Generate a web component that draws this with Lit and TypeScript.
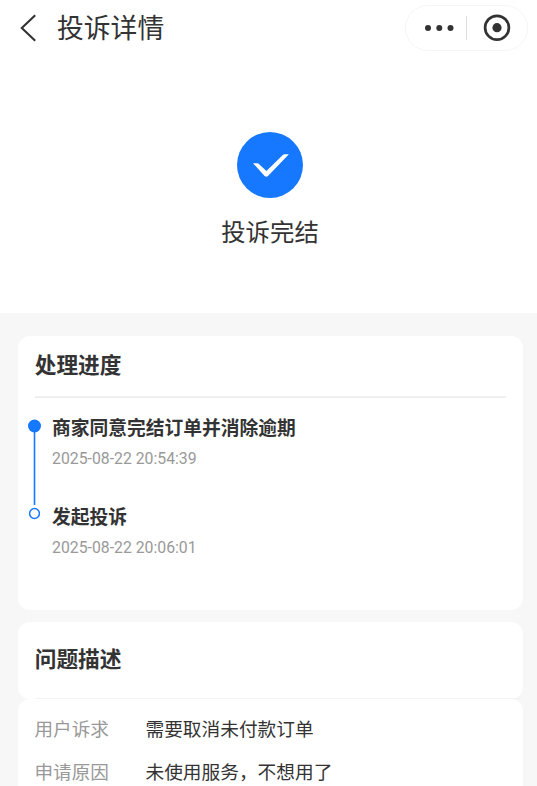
import { LitElement, html, css } from "lit";
import { customElement } from "lit/decorators.js";

interface Step {
  title: string;
  time: string;
}

const steps: Step[] = [
  { title: "商家同意完结订单并消除逾期", time: "2025-08-22 20:54:39" },
  { title: "发起投诉", time: "2025-08-22 20:06:01" },
];

const details: [string, string][] = [
  ["用户诉求", "需要取消未付款订单"],
  ["申请原因", "未使用服务，不想用了"],
];

@customElement("app-root")
export class AppRoot extends LitElement {
  static styles = css`
    :host {
      display: block;
      height: 786px;
      overflow: hidden;
      background: #f7f7f7;
      color: #333;
      font-family: Roboto, "Noto Sans CJK SC", sans-serif;
    }
    * {
      box-sizing: border-box;
    }
    svg {
      display: block;
    }
    .top {
      height: 313px;
      background: #fff;
    }
    .nav {
      height: 56px;
      padding: 5px 9px 0 20px;
      display: flex;
      align-items: flex-start;
    }
    .back {
      margin-top: 9px;
    }
    .nav-title {
      margin-left: 20px;
      margin-top: 4px;
      flex: 1;
      font-size: 26.8px;
      line-height: 40px;
    }
    .capsule {
      width: 123px;
      height: 46px;
      border: 1px solid #f5f5f5;
      border-radius: 23px;
    }
    .result {
      margin-top: 76px;
      display: flex;
      flex-direction: column;
      align-items: center;
      padding-left: 3px;
    }
    .result-text {
      margin-top: 17px;
      font-size: 24.4px;
      line-height: 36px;
    }
    .card {
      margin: 0 14.5px 0 17.5px;
      background: #fff;
      border-radius: 12px;
    }
    .progress {
      margin-top: 23px;
      height: 273.5px;
    }
    .problem {
      margin-top: 12px;
      height: 77.5px;
      display: flex;
      flex-direction: column;
      justify-content: space-between;
    }
    .heading {
      font-size: 21.7px;
      line-height: 32px;
      font-weight: 700;
      padding-left: 17.2px;
    }
    .progress .heading {
      padding-top: 14px;
    }
    .problem .heading {
      padding-top: 22px;
    }
    .rule {
      height: 2px;
      margin: 14px 17px 0 17px;
      border-top: 1px solid #f3f3f3;
      border-bottom: 1px solid #ececec;
    }
    .rule.faint {
      height: 1px;
      margin: 0 0 0 17px;
      background: #f3f3f3;
      border: 0;
    }
    .timeline {
      display: flex;
      padding: 16px 0 0 10px;
    }
    .steps {
      margin-left: 11.5px;
    }
    .rail {
      margin-top: 5px;
    }
    .step {
      height: 88.5px;
    }
    .step-title {
      padding-top: 1px;
      font-size: 18.75px;
      line-height: 28px;
      font-weight: 700;
    }
    .step-time {
      margin-top: 6px;
      font-size: 15.8px;
      line-height: 20px;
      color: #999;
    }
    .details {
      height: 120px;
      padding: 9.5px 17px;
    }
    .row {
      display: flex;
      height: 43px;
      font-size: 18.7px;
      line-height: 42px;
    }
    .label {
      width: 111px;
      font-size: 18.6px;
      color: #999;
    }
  `;

  render() {
    return html`
      <section class="top">
        <header class="nav">
          <svg class="back" width="17" height="29" viewBox="0 0 17 29" fill="none" stroke="#333" stroke-width="2.1">
            <path d="M15.2 1.2 1.8 14 15.2 26.7" />
          </svg>
          <div class="nav-title">投诉详情</div>
          <div class="capsule">
            <svg width="121" height="44" viewBox="0 0 121 44" fill="#333">
              <circle cx="22" cy="22" r="3" />
              <circle cx="33.3" cy="22" r="3" />
              <circle cx="44.5" cy="22" r="3" />
              <path d="M60.5 10v24" stroke="#ddd" />
              <circle cx="91" cy="21.7" r="11.9" fill="none" stroke="#333" stroke-width="2.7" />
              <circle cx="91" cy="21.7" r="4.6" />
            </svg>
          </div>
        </header>
        <div class="result">
          <svg width="66" height="66" viewBox="0 0 66 66">
            <circle cx="33" cy="33" r="33" fill="#1677ff" />
            <path d="M16 31.2h4.2q1 0 1.7.8l7.5 7 16.4-16q.8-.8 1.8-.8h4.3L31 44q-1.7 1.6-3.4 0Z" fill="#fff" />
          </svg>
          <div class="result-text">投诉完结</div>
        </div>
      </section>

      <section class="card progress">
        <div class="heading">处理进度</div>
        <div class="rule"></div>
        <div class="timeline">
          <svg class="rail" width="13" height="101" viewBox="0 0 13 101">
            <path d="M6.5 7v79" stroke="#1677ff" stroke-width="1.6" />
            <circle cx="6.5" cy="7" r="6.5" fill="#1677ff" />
            <circle cx="6.5" cy="94.5" r="4.9" fill="#fff" stroke="#1677ff" stroke-width="1.5" />
          </svg>
          <div class="steps">
            ${steps.map(
              (s) => html`<div class="step">
                <div class="step-title">${s.title}</div>
                <div class="step-time">${s.time}</div>
              </div>`
            )}
          </div>
        </div>
      </section>

      <section class="card problem">
        <div class="heading">问题描述</div>
        <div class="rule faint"></div>
      </section>

      <section class="card details">
        ${details.map(
          ([label, value]) => html`<div class="row">
            <span class="label">${label}</span><span>${value}</span>
          </div>`
        )}
      </section>
    `;
  }
}
